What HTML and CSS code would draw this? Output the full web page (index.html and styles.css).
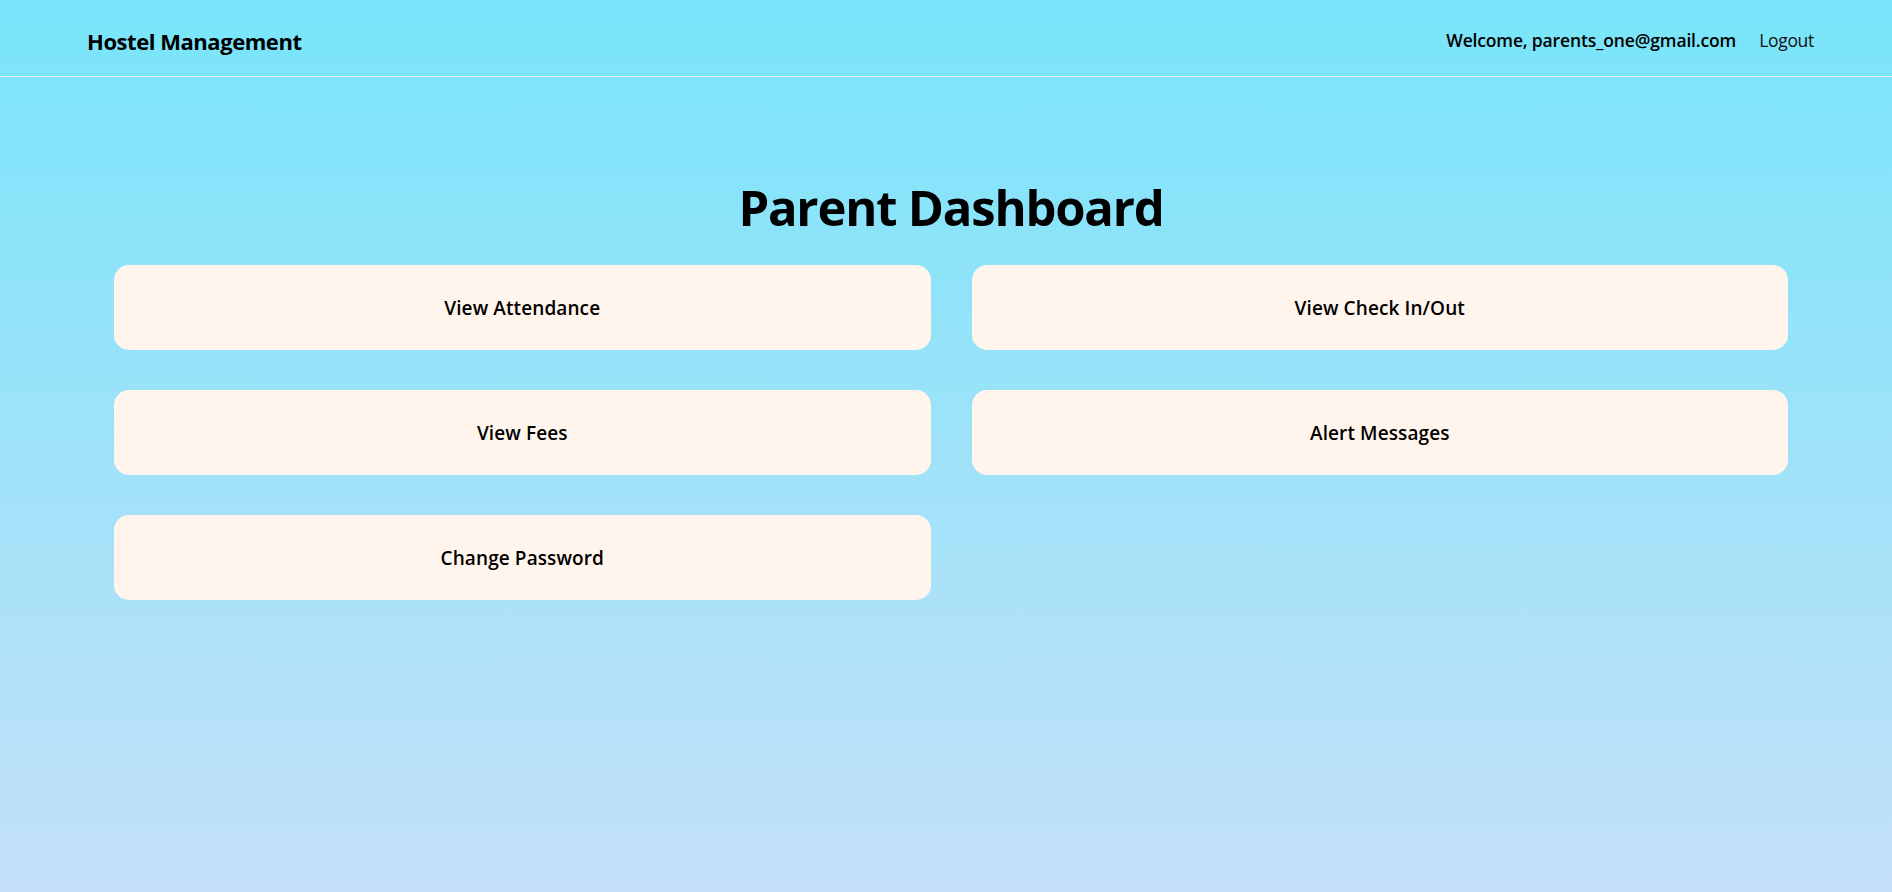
FILE: index.html
```html
<!DOCTYPE html>
<html lang="en">
<head>
<meta charset="utf-8">
<title>Parent Dashboard</title>
<link rel="stylesheet" href="styles.css">
</head>
<body>
<header class="navbar">
  <div class="brand">Hostel Management</div>
  <nav class="nav-right">
    <span class="welcome">Welcome, parents_one@gmail.com</span>
    <a class="logout" href="#">Logout</a>
  </nav>
</header>
<main class="dashboard">
  <h1 class="title">Parent Dashboard</h1>
  <div class="card-grid">
    <a class="card" href="#">View Attendance</a>
    <a class="card" href="#">View Check In/Out</a>
    <a class="card" href="#">View Fees</a>
    <a class="card" href="#">Alert Messages</a>
    <a class="card" href="#">Change Password</a>
  </div>
</main>
</body>
</html>
```

FILE: styles.css
```css
* { box-sizing: border-box; }

html, body {
  margin: 0;
  padding: 0;
}

body {
  min-height: 892px;
  font-family: "Open Sans", "Noto Sans", sans-serif;
  color: #000;
  background: linear-gradient(to bottom, #78e5fa 0%, #c4e0f8 100%);
}

.navbar {
  height: 77px;
  display: flex;
  align-items: center;
  justify-content: space-between;
  padding: 0 78px 0 87px;
  border-bottom: 1px solid #e2ecef;
}

.brand {
  font-size: 22px;
  font-weight: 700;
  letter-spacing: -0.45px;
  padding-top: 6px;
}

.nav-right {
  display: flex;
  align-items: center;
  gap: 23px;
  padding-top: 3px;
}

.welcome {
  font-size: 17.5px;
  font-weight: 600;
  letter-spacing: -0.15px;
}

.logout {
  font-size: 17.5px;
  color: #111;
  text-decoration: none;
  letter-spacing: -0.3px;
}

.dashboard {
  padding: 0 104px 0 114px;
}

.title {
  margin: 0;
  padding-top: 96px;
  text-align: center;
  font-size: 49px;
  font-weight: 700;
  line-height: 68px;
  letter-spacing: -1.2px;
}

.card-grid {
  margin-top: 24px;
  display: grid;
  grid-template-columns: 1fr 1fr;
  column-gap: 41px;
  row-gap: 40px;
}

.card {
  height: 85px;
  display: flex;
  align-items: center;
  justify-content: center;
  background: #fff5ec;
  border-radius: 15px;
  color: #000;
  text-decoration: none;
  font-size: 19px;
  font-weight: 600;
  letter-spacing: 0.1px;
}
```
